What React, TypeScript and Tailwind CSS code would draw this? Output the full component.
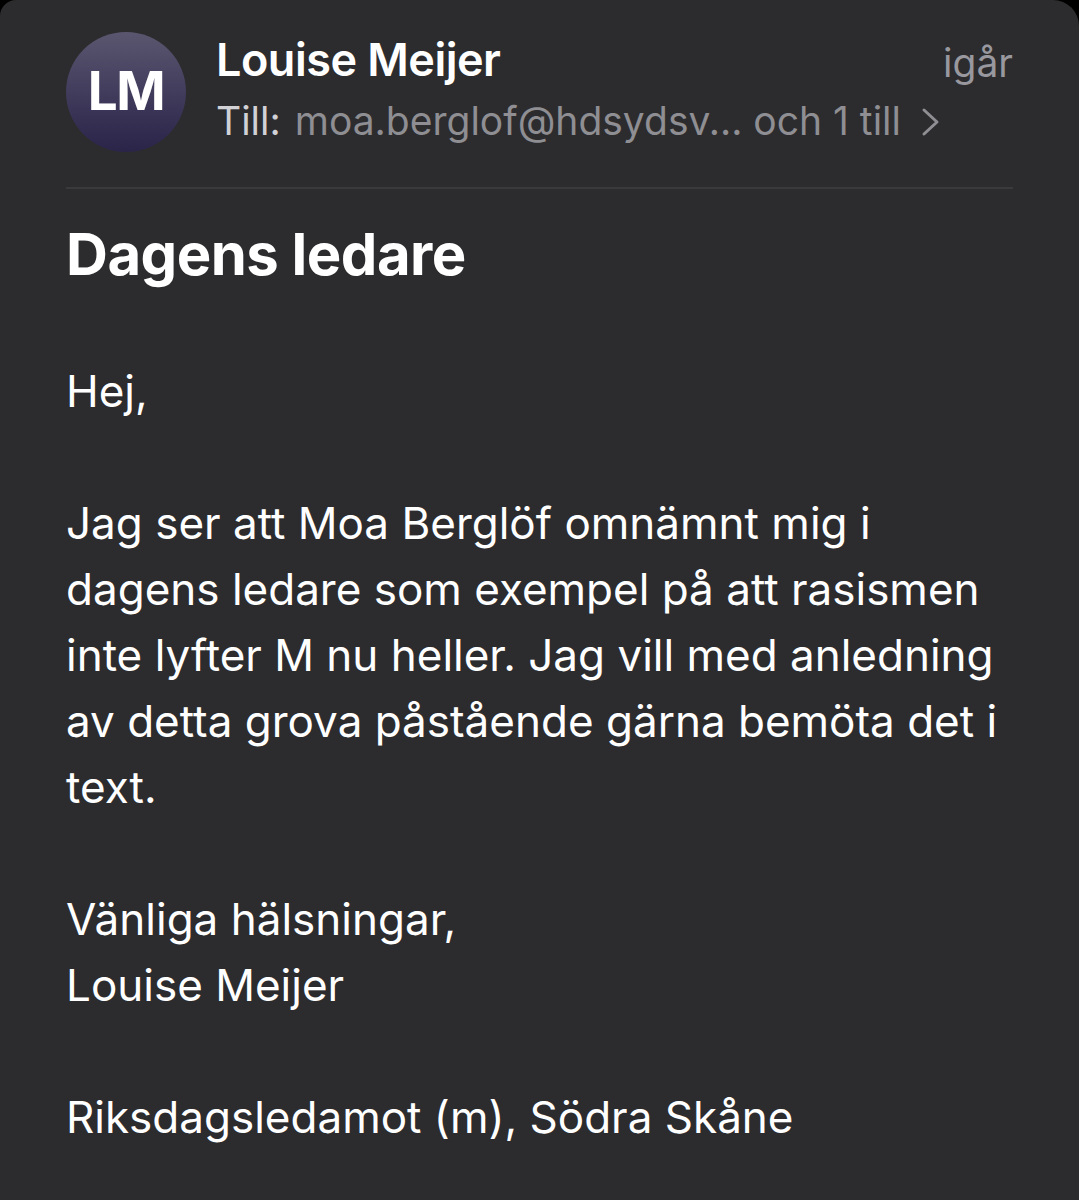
// Mail message view — dark mode, single message opened
const BODY = [
  'Hej,',
  '',
  'Jag ser att Moa Berglöf omnämnt mig i',
  'dagens ledare som exempel på att rasismen',
  'inte lyfter M nu heller. Jag vill med anledning',
  'av detta grova påstående gärna bemöta det i',
  'text.',
  '',
  'Vänliga hälsningar,',
  'Louise Meijer',
  '',
  'Riksdagsledamot (m), Södra Skåne',
]

function Chevron() {
  return (
    <svg width="20" height="30" viewBox="0 0 20 30" fill="none" className="ml-[20px] mt-[2px]">
      <polyline points="3,3 16,15 3,27" stroke="#8e8e93" strokeWidth="3" strokeLinecap="round" strokeLinejoin="round" />
    </svg>
  )
}

export default function App() {
  return (
    <div className="min-h-[1200px] w-[1079px] bg-black" style={{ fontFamily: 'Inter, "Noto Sans", sans-serif' }}>
      <div className="h-[1200px] bg-[#2c2c2e] rounded-tl-[16px] rounded-tr-[26px] px-[66px] overflow-hidden">
        {/* Sender header */}
        <div className="flex items-start pt-[32px]">
          <div className="w-[120px] h-[120px] shrink-0 rounded-full bg-gradient-to-b from-[#5b566f] to-[#2a2449] flex items-center justify-center">
            <span className="text-white text-[53px] font-bold tracking-[-1.5px]">LM</span>
          </div>
          <div className="ml-[30px] flex-1 min-w-0 pt-[2px]">
            <div className="flex items-start justify-between">
              <p className="text-white text-[45px] font-semibold leading-[52px] tracking-[-0.5px]">Louise Meijer</p>
              <span className="text-[#98989e] text-[39px] leading-[52px] mt-[3px]">igår</span>
            </div>
            <div className="flex items-center mt-[6px] text-[39px] leading-[52px]">
              <span className="text-[#d1d1d6]">Till:</span>
              <span className="text-[#8e8e93] ml-[14px]">moa.berglof@hdsydsv... och 1 till</span>
              <Chevron />
            </div>
          </div>
        </div>

        <div className="h-[2px] bg-[#3a3a3d] mt-[35px]" />

        {/* Subject */}
        <h1 className="text-white text-[58px] font-bold leading-[64px] mt-[33px] tracking-[-0.5px]">Dagens ledare</h1>

        {/* Body */}
        <div className="mt-[72px] text-white text-[44px] leading-[66px] whitespace-nowrap">
          {BODY.map((line, i) =>
            line === '' ? <div key={i} className="h-[66px]" /> : <p key={i}>{line}</p>
          )}
        </div>
      </div>
    </div>
  )
}
